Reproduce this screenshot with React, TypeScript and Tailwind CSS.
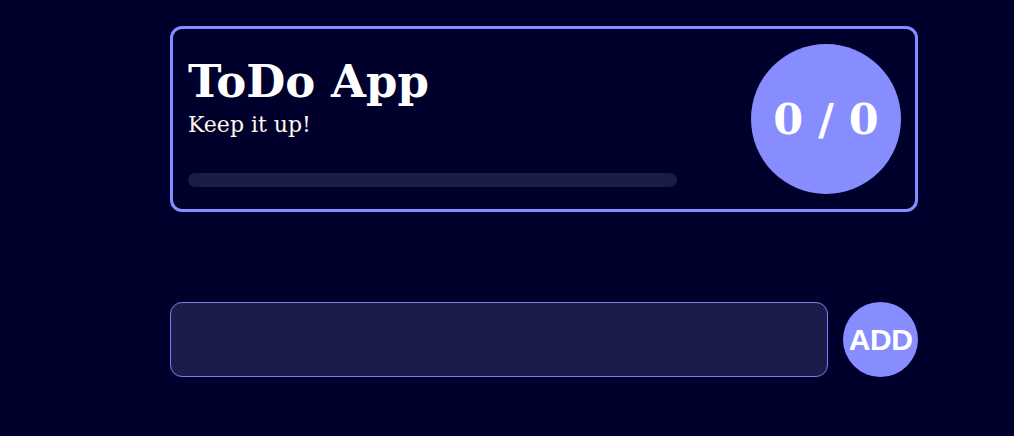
import React, { useState } from 'react';

const App: React.FC = () => {
  const [text, setText] = useState('');
  const done = 0;
  const total = 0;

  return (
    <div className="min-h-[436px] w-full bg-[#00002d] pt-[26px]">
      <div className="ml-[170px] w-[748px]">
        {/* header card */}
        <div className="flex h-[186px] items-center justify-between rounded-[12px] border-[3px] border-[#878dff] pl-[15px] pr-[14px]">
          <div className="flex w-[490px] flex-col self-stretch pt-[27px]">
            <h1 className="font-['DejaVu_Serif',serif] text-[45px] leading-[52px] font-bold text-white">
              ToDo App
            </h1>
            <p className="mt-[3px] font-['DejaVu_Serif',serif] text-[22px] leading-[28px] text-[#fff8e8]">
              Keep it up!
            </p>
            <div className="mt-[34px] h-[14px] w-[489px] rounded-full bg-[#1b1c45]" />
          </div>
          <div className="flex h-[150px] w-[150px] items-center justify-center rounded-full bg-[#878dff]">
            <span className="font-['DejaVu_Serif',serif] text-[43px] font-bold text-white">
              {done} / {total}
            </span>
          </div>
        </div>

        {/* add task row */}
        <form
          className="mt-[90px] flex items-center gap-[15px]"
          onSubmit={(e) => {
            e.preventDefault();
            setText('');
          }}
        >
          <input
            value={text}
            onChange={(e) => setText(e.target.value)}
            className="h-[75px] w-[659px] rounded-[12px] border border-[#7a80ee] bg-[#1a1d4a] px-4 text-white outline-none"
          />
          <button
            type="submit"
            className="flex h-[75px] w-[75px] items-center justify-center rounded-full bg-[#878dff] font-['Liberation_Sans',sans-serif] text-[30px] font-bold tracking-[-0.5px] text-white"
          >
            ADD
          </button>
        </form>
      </div>
    </div>
  );
};

export default App;
